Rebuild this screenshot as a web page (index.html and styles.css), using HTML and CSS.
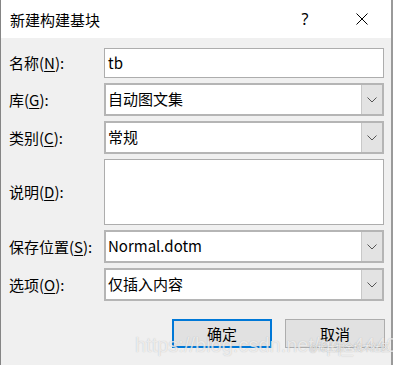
FILE: index.html
```html
<!DOCTYPE html>
<html lang="zh-CN">
<head>
<meta charset="utf-8">
<title>新建构建基块</title>
<link rel="stylesheet" href="styles.css">
</head>
<body>
<div class="window">
  <div class="titlebar">
    <div class="title">新建构建基块</div>
    <div class="title-btn help">?</div>
    <div class="title-btn close">
      <svg width="12" height="12" viewBox="0 0 12 12"><path d="M0.5 0.5 L11.5 11.5 M11.5 0.5 L0.5 11.5" stroke="#000" stroke-width="1" fill="none"/></svg>
    </div>
  </div>
  <div class="body">
    <div class="form">
      <label class="lbl">名称(<u>N</u>):</label>
      <div class="field input h30">tb</div>

      <label class="lbl">库(<u>G</u>):</label>
      <div class="field combo h33">
        <div class="combo-text">自动图文集</div>
        <div class="drop"><svg width="10" height="6" viewBox="0 0 10 6"><path d="M0.5 0.5 L5 5 L9.5 0.5" stroke="#555" stroke-width="1" fill="none"/></svg></div>
      </div>

      <label class="lbl">类别(<u>C</u>):</label>
      <div class="field combo h33">
        <div class="combo-text">常规</div>
        <div class="drop"><svg width="10" height="6" viewBox="0 0 10 6"><path d="M0.5 0.5 L5 5 L9.5 0.5" stroke="#555" stroke-width="1" fill="none"/></svg></div>
      </div>

      <label class="lbl">说明(<u>D</u>):</label>
      <div class="field input h66"></div>

      <label class="lbl">保存位置(<u>S</u>):</label>
      <div class="field combo h33">
        <div class="combo-text">Normal.dotm</div>
        <div class="drop"><svg width="10" height="6" viewBox="0 0 10 6"><path d="M0.5 0.5 L5 5 L9.5 0.5" stroke="#555" stroke-width="1" fill="none"/></svg></div>
      </div>

      <label class="lbl">选项(<u>O</u>):</label>
      <div class="field combo h33">
        <div class="combo-text">仅插入内容</div>
        <div class="drop"><svg width="10" height="6" viewBox="0 0 10 6"><path d="M0.5 0.5 L5 5 L9.5 0.5" stroke="#555" stroke-width="1" fill="none"/></svg></div>
      </div>
    </div>
    <div class="buttons">
      <div class="btn default">确定</div>
      <div class="btn">取消</div>
    </div>
    <div class="watermark">https://blog.csdn.net/qq_44402</div>
    <div class="watermark2">@稀土掘金技术社区</div>
  </div>
</div>
</body>
</html>
```

FILE: styles.css
```css
* { box-sizing: border-box; }
html, body {
  margin: 0;
  padding: 0;
  background: #f0f0f0;
}
body {
  font-family: "Noto Sans CJK SC", "Noto Sans", sans-serif;
  font-size: 15px;
  color: #000;
  width: 393px;
  height: 365px;
  overflow: hidden;
}
.window {
  width: 393px;
  height: 365px;
  border-left: 1px solid #858585;
  border-right: 2px solid #9a9a9a;
  background: #f0f0f0;
  display: flex;
  flex-direction: column;
}
.titlebar {
  height: 38px;
  background: #fff;
  display: flex;
  align-items: center;
  padding-left: 9px;
}
.title {
  flex: 1;
  font-size: 15px;
  line-height: 20px;
  margin-top: 1px;
}
.title-btn {
  display: flex;
  align-items: center;
  justify-content: center;
  height: 38px;
}
.help {
  width: 16px;
  margin-right: 43px;
  font-family: "Noto Sans", sans-serif;
  font-size: 16px;
  line-height: 20px;
}
.close {
  width: 12px;
  margin-right: 23px;
}
.body {
  position: relative;
  flex: 1;
  padding: 10px 6px 0 8px;
}
.form {
  display: grid;
  grid-template-columns: 95px 280px;
  row-gap: 5px;
  align-items: center;
}
.lbl {
  font-size: 15px;
  line-height: 20px;
  white-space: nowrap;
}
.lbl u {
  text-underline-offset: 2px;
  text-decoration-thickness: 1px;
}
.field {
  background: #fff;
  border: 1px solid #adadad;
  font-size: 15px;
  line-height: 20px;
}
.input {
  padding: 4px 3px;
}
.h30 { height: 30px; }
.h33 { height: 33px; }
.h66 { height: 66px; }
.combo {
  display: flex;
  border: 2px solid #b5b5b5;
}
.combo-text {
  flex: 1;
  padding: 4px 2px;
}
.drop {
  width: 21px;
  background: #e3e3e3;
  border-left: 1px solid #c8c8c8;
  display: flex;
  align-items: center;
  justify-content: center;
}
.buttons {
  display: flex;
  justify-content: flex-end;
  gap: 13px;
  margin-top: 18px;
}
.btn {
  width: 100px;
  height: 29px;
  background: #e1e1e1;
  border: 1px solid #adadad;
  display: flex;
  align-items: center;
  justify-content: center;
  font-size: 15px;
  line-height: 20px;
}
.btn.default {
  border: 2px solid #0078d7;
}
.watermark {
  position: absolute;
  left: 134px;
  top: 296px;
  font-family: "Liberation Sans", sans-serif;
  font-size: 20px;
  line-height: 22px;
  color: rgba(255, 255, 255, 0.7);
  text-shadow: 0 0 1px rgba(120, 120, 120, 0.45);
  white-space: nowrap;
}
.watermark2 {
  position: absolute;
  left: 308px;
  top: 304px;
  font-size: 9px;
  line-height: 12px;
  color: rgba(255, 255, 255, 0.85);
  text-shadow: 0 0 1px rgba(90, 90, 90, 0.6);
  white-space: nowrap;
}
```
